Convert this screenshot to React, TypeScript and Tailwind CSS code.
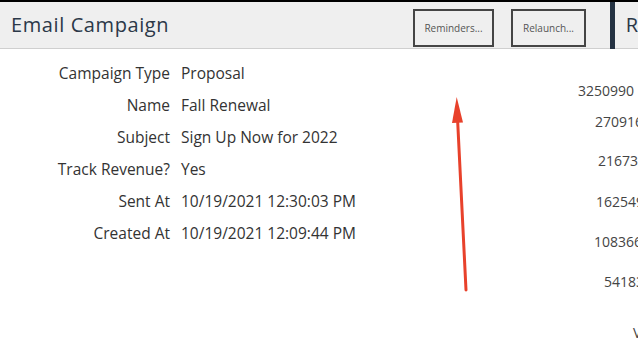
import React from "react";

const rows: [string, string][] = [
  ["Campaign Type", "Proposal"],
  ["Name", "Fall Renewal"],
  ["Subject", "Sign Up Now for 2022"],
  ["Track Revenue?", "Yes"],
  ["Sent At", "10/19/2021 12:30:03 PM"],
  ["Created At", "10/19/2021 12:09:44 PM"],
];

const labels: { t: string; x: number; y: number }[] = [
  { t: "3250990", x: 578, y: 91 },
  { t: "2709160", x: 595, y: 122 },
  { t: "2167328", x: 598, y: 161 },
  { t: "1625496", x: 596, y: 202 },
  { t: "1083664", x: 594, y: 242 },
  { t: "541832", x: 604, y: 282 },
  { t: "V", x: 633, y: 333 },
];

export default function App() {
  return (
    <div
      className="relative w-[638px] h-[349px] overflow-hidden bg-white border-t-2 border-black"
      style={{ fontFamily: '"Open Sans", sans-serif' }}
    >
      <div className="flex h-[47px]">
        <div className="w-[612px] flex items-start bg-[#efefef] border-b border-[#cfcfcf]">
          <div className="h-[46px] flex items-center pl-[11px] text-[20px] text-[#2b3848] tracking-[0.6px] w-[413px]">
            Email Campaign
          </div>
          <div className="flex gap-[17px] pt-[7px]">
            <div className="w-[81px] h-[38px] border-2 border-[#454545] flex items-center justify-center text-[10px] text-[#555]">
              Reminders...
            </div>
            <div className="w-[75px] h-[38px] border-2 border-[#454545] flex items-center justify-center text-[10px] text-[#555]">
              Relaunch...
            </div>
          </div>
        </div>
        <div className="w-[5px] bg-[#243242]" />
        <div className="flex-1 bg-[#efefef] border-b border-[#cfcfcf] flex items-center pl-[11px] text-[20px] text-[#2b3848]">
          R
        </div>
      </div>

      <div className="pt-[9px]">
        {rows.map(([k, v]) => (
          <div key={k} className="flex h-[32px] items-center text-[15.5px] text-[#333]">
            <div className="w-[170px] text-right">{k}</div>
            <div className="pl-[11px]">{v}</div>
          </div>
        ))}
      </div>

      {labels.map((l) => (
        <div
          key={l.t}
          className="absolute text-[14px] text-[#444] leading-none whitespace-nowrap"
          style={{ left: l.x, top: l.y - 9 }}
        >
          {l.t}
        </div>
      ))}

      <svg className="absolute left-0 top-[-2px]" width="638" height="349">
        <line x1="466" y1="290" x2="457.5" y2="118" stroke="#e8412b" strokeWidth="3" strokeLinecap="round" />
        <polygon points="456.7,97 452,123 463,122.5" fill="#e8412b" />
      </svg>
    </div>
  );
}
